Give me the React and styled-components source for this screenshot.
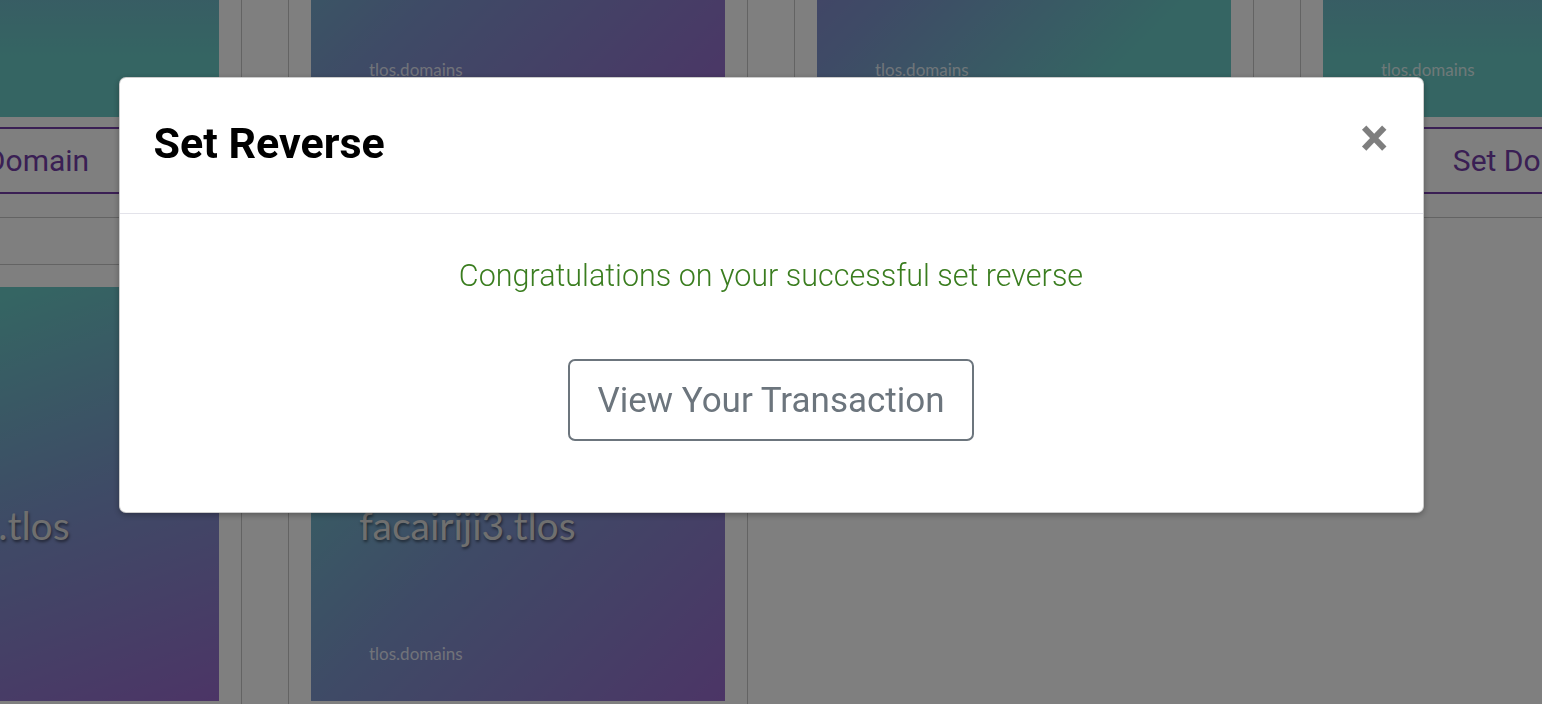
import React from "react";
import styled, { createGlobalStyle } from "styled-components";

const GlobalStyle = createGlobalStyle`
  html, body {
    margin: 0;
    padding: 0;
    background: #ffffff;
    overflow: hidden;
    font-family: Roboto, "Liberation Sans", sans-serif;
  }
`;

const TEAL = "#6acac6";
const BLUE = "#7d96cc";
const PURPLE = "#986acc";

// each nft picture gets its own gradient
const cards = [
  { name: "facairiji0.tlos", bg: `linear-gradient(180deg, ${PURPLE} 0%, ${BLUE} 40%, ${TEAL} 85%)` },
  { name: "facairiji2.tlos", bg: `linear-gradient(135deg, ${TEAL} 10%, ${BLUE} 50%, ${PURPLE} 100%)` },
  { name: "facairiji4.tlos", bg: `linear-gradient(135deg, ${PURPLE} 0%, ${BLUE} 45%, ${TEAL} 80%)` },
  { name: "facairiji5.tlos", bg: `linear-gradient(180deg, ${PURPLE} 0%, ${BLUE} 40%, ${TEAL} 85%)` },
  { name: "facairiji1.tlos", bg: `linear-gradient(160deg, ${TEAL} 15%, ${BLUE} 55%, ${PURPLE} 100%)` },
  { name: "facairiji3.tlos", bg: `linear-gradient(135deg, ${TEAL} 10%, ${BLUE} 50%, ${PURPLE} 100%)` },
];

const App = () => {
  return (
    <>
      <GlobalStyle />
      <Page>
        <DomainGrid>
          {cards.map((card) => (
            <DomainCell key={card.name}>
              <Art $bg={card.bg}>
                <ArtName>{card.name}</ArtName>
                <ArtBrand>tlos.domains</ArtBrand>
              </Art>
              <SetDomainButton>Set Domain</SetDomainButton>
            </DomainCell>
          ))}
        </DomainGrid>
      </Page>

      <Backdrop>
        <ModalBox>
          <ModalHeader>
            <ModalTitle>Set Reverse</ModalTitle>
            <CloseButton aria-label="Close">×</CloseButton>
          </ModalHeader>
          <ModalBody>
            <SuccessText>Congratulations on your successful set reverse</SuccessText>
            <OutlineButton>View Your Transaction</OutlineButton>
          </ModalBody>
        </ModalBox>
      </Backdrop>
    </>
  );
};

// page is scrolled down a bit, so the first row starts above the window
const Page = styled.div`
  display: flex;
  justify-content: center;
  margin-top: -320px;
`;

const DomainGrid = styled.div`
  flex-shrink: 0;
  display: grid;
  grid-template-columns: repeat(4, 460px);
  column-gap: 46px;
  row-gap: 46px;
`;

const DomainCell = styled.div`
  box-sizing: border-box;
  display: flex;
  flex-direction: column;
  border: 1px solid #c6c6c6;
  padding: 22px 22px 23px;
`;

const Art = styled.div`
  width: 414px;
  height: 414px;
  display: flex;
  flex-direction: column;
  box-sizing: border-box;
  padding: 219px 0 39px 48px;
  background: ${(p) => p.$bg};
`;

const ArtName = styled.span`
  font-family: Lato, "Open Sans", sans-serif;
  font-size: 39px;
  line-height: 1;
  color: #dedede;
  text-shadow: 1px 2px 3px rgba(0, 0, 0, 0.5);
`;

const ArtBrand = styled.span`
  margin-top: auto;
  margin-left: 10px;
  font-family: Lato, "Open Sans", sans-serif;
  font-size: 17px;
  line-height: 1;
  color: rgba(255, 255, 255, 0.78);
`;

const SetDomainButton = styled.button`
  margin-top: 10px;
  height: 67px;
  box-sizing: border-box;
  background: transparent;
  border: 2px solid #753ea9;
  border-radius: 0;
  font-family: Roboto, sans-serif;
  font-size: 30px;
  color: #753ea9;
  cursor: pointer;
`;

const Backdrop = styled.div`
  position: fixed;
  inset: 0;
  background: rgba(0, 0, 0, 0.5);
  display: flex;
  justify-content: center;
  align-items: flex-start;
  padding-top: 77px;
`;

const ModalBox = styled.div`
  width: 1305px;
  box-sizing: border-box;
  background: #ffffff;
  border: 1px solid rgba(0, 0, 0, 0.2);
  border-radius: 7px;
  box-shadow: 0 2px 6px rgba(0, 0, 0, 0.3);
`;

const ModalHeader = styled.div`
  display: flex;
  justify-content: space-between;
  align-items: flex-start;
  padding: 35px 34px 40px 34px;
  border-bottom: 1px solid #e3e3ea;
`;

const ModalTitle = styled.h5`
  margin: 0;
  font-size: 43px;
  font-weight: 700;
  line-height: 60px;
  color: #000000;
`;

const CloseButton = styled.button`
  margin-top: -1px;
  padding: 0;
  background: transparent;
  border: none;
  font-family: Roboto, sans-serif;
  font-size: 53px;
  font-weight: 700;
  line-height: 1;
  color: #000000;
  opacity: 0.5;
  cursor: pointer;
`;

const ModalBody = styled.div`
  display: flex;
  flex-direction: column;
  align-items: center;
  padding: 40px 32px 71px;
`;

const SuccessText = styled.p`
  margin: 0;
  font-size: 30.5px;
  font-weight: 300;
  line-height: 44px;
  color: #3a7d1f;
`;

const OutlineButton = styled.button`
  margin-top: 61px;
  height: 82px;
  box-sizing: border-box;
  padding: 0 27px;
  background: #ffffff;
  border: 2px solid #6c757d;
  border-radius: 7px;
  font-family: Roboto, sans-serif;
  font-size: 35px;
  font-weight: 400;
  color: #6c757d;
  cursor: pointer;
`;

export default App;
